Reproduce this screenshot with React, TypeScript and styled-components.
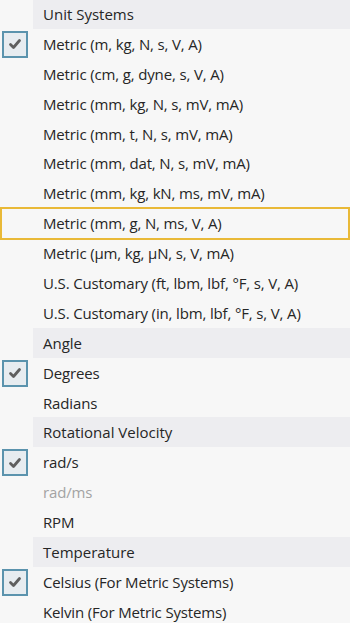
import React from "react";
import styled, { createGlobalStyle } from "styled-components";

const Global = createGlobalStyle`
  html, body { margin: 0; padding: 0; background: #f7f7f7; }
  body { font-family: "Open Sans", "Noto Sans", sans-serif; overflow: hidden; }
`;

const Menu = styled.div`
  width: 350px;
  height: 623px;
  background: #f7f7f7;
  display: flex;
  flex-direction: column;
  margin-top: -1px;
  overflow: hidden;
`;

const Header = styled.div`
  height: 29.9px;
  flex: none;
  margin-left: 33px;
  padding-left: 10px;
  background: #ededf0;
  display: flex;
  align-items: center;
  font-size: 15px;
  font-weight: 500;
  color: #262626;
`;

const Item = styled.div`
  height: 29.9px;
  flex: none;
  position: relative;
  display: flex;
  align-items: center;
  padding-left: 43px;
  font-size: 15px;
  font-weight: 500;
  box-sizing: border-box;
`;

const Highlight = styled.div`
  position: absolute;
  left: 0;
  right: 0;
  top: -1px;
  bottom: -2px;
  border: 2px solid #e9b937;
  pointer-events: none;
`;

const Label = styled.span<{ $disabled?: boolean }>`
  color: ${(p) => (p.$disabled ? "#a3a3a3" : "#262626")};
  white-space: nowrap;
  letter-spacing: -0.15px;
`;

const Check = styled.div`
  position: absolute;
  left: 2px;
  top: 2px;
  width: 22px;
  height: 23px;
  border: 2px solid #5b93ad;
  background: #e7ecf0;
  display: flex;
  align-items: center;
  justify-content: center;
`;

type Row =
  | { kind: "header"; text: string }
  | { kind: "item"; text: string; checked?: boolean; selected?: boolean; disabled?: boolean };

const rows: Row[] = [
  { kind: "header", text: "Unit Systems" },
  { kind: "item", text: "Metric (m, kg, N, s, V, A)", checked: true },
  { kind: "item", text: "Metric (cm, g, dyne, s, V, A)" },
  { kind: "item", text: "Metric (mm, kg, N, s, mV, mA)" },
  { kind: "item", text: "Metric (mm, t, N, s, mV, mA)" },
  { kind: "item", text: "Metric (mm, dat, N, s, mV, mA)" },
  { kind: "item", text: "Metric (mm, kg, kN, ms, mV, mA)" },
  { kind: "item", text: "Metric (mm, g, N, ms, V, A)", selected: true },
  { kind: "item", text: "Metric (µm, kg, µN, s, V, mA)" },
  { kind: "item", text: "U.S. Customary (ft, lbm, lbf, °F, s, V, A)" },
  { kind: "item", text: "U.S. Customary (in, lbm, lbf, °F, s, V, A)" },
  { kind: "header", text: "Angle" },
  { kind: "item", text: "Degrees", checked: true },
  { kind: "item", text: "Radians" },
  { kind: "header", text: "Rotational Velocity" },
  { kind: "item", text: "rad/s", checked: true },
  { kind: "item", text: "rad/ms", disabled: true },
  { kind: "item", text: "RPM" },
  { kind: "header", text: "Temperature" },
  { kind: "item", text: "Celsius (For Metric Systems)", checked: true },
  { kind: "item", text: "Kelvin (For Metric Systems)" },
];

const CheckMark = () => (
  <svg width="14" height="12" viewBox="0 0 14 12">
    <path d="M2.5 6.5 L5.5 9.5 L11.5 2.5" fill="none" stroke="#5f5f5f" strokeWidth="2.8" strokeLinecap="round" strokeLinejoin="round" />
  </svg>
);

export default function App() {
  return (
    <>
      <Global />
      <Menu>
        {rows.map((r, i) =>
          r.kind === "header" ? (
            <Header key={i}>{r.text}</Header>
          ) : (
            <Item key={i}>
              {r.checked && (
                <Check>
                  <CheckMark />
                </Check>
              )}
              <Label $disabled={r.disabled}>{r.text}</Label>
              {r.selected && <Highlight />}
            </Item>
          )
        )}
      </Menu>
    </>
  );
}
